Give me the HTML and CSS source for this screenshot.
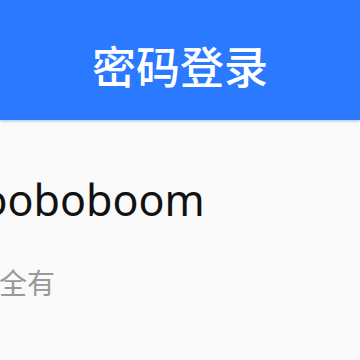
FILE: index.html
```html
<!DOCTYPE html>
<html lang="zh">
<head>
<meta charset="utf-8">
<link rel="stylesheet" href="styles.css">
</head>
<body>
<header class="bar"><h1 class="title">密码登录</h1></header>
<main class="content">
  <div class="user">booboboom</div>
  <div class="note">权全有</div>
</main>
</body>
</html>
```
FILE: styles.css
```css
html, body {
  margin: 0;
  padding: 0;
  width: 360px;
  height: 360px;
  overflow: hidden;
  background: #fafafa;
}
.bar {
  height: 120px;
  background: #2a79ff;
  display: flex;
  align-items: center;
  justify-content: center;
  box-shadow: 0 1px 3px rgba(42, 121, 255, 0.45);
}
.title {
  margin: 0;
  padding-top: 10px;
  color: #ffffff;
  font-family: "Noto Sans CJK SC", sans-serif;
  font-weight: 500;
  font-size: 44px;
  line-height: 1;
}
.content {
  display: flex;
  flex-direction: column;
  align-items: flex-start;
  padding-top: 54px;
}
.user {
  margin-left: -45px;
  font-family: "Noto Sans", sans-serif;
  font-size: 43px;
  line-height: 52px;
  color: #111111;
}
.note {
  margin-top: 40px;
  margin-left: -29px;
  font-family: "Noto Sans CJK SC", sans-serif;
  font-size: 28px;
  line-height: 32px;
  color: #999999;
}
```
